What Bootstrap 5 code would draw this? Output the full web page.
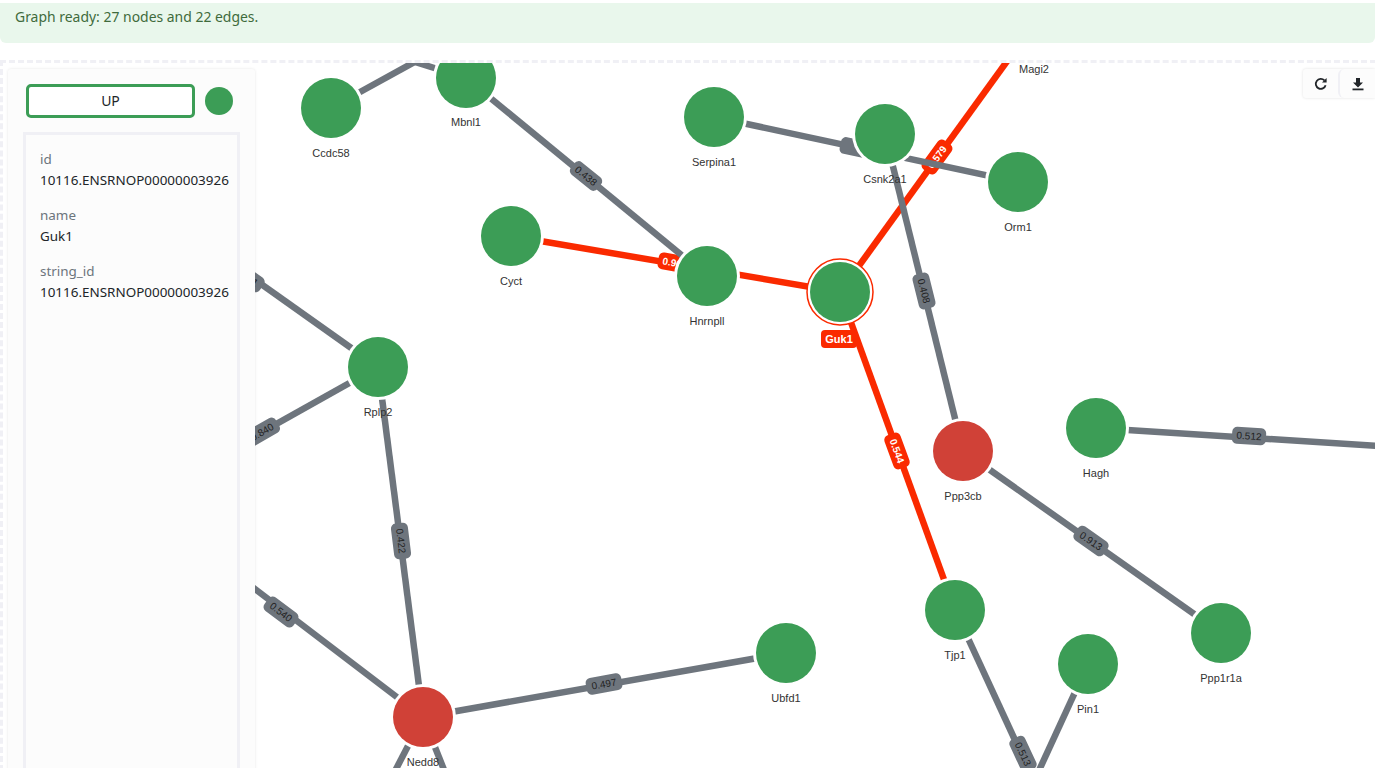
<!DOCTYPE html>
<html lang="en">
<head>
<meta charset="utf-8">
<title>Graph</title>
<link rel="stylesheet" href="https://cdn.jsdelivr.net/npm/bootstrap@5.3.0/dist/css/bootstrap.min.css">
<style>
html, body { height: 768px; overflow: hidden; background: #fff; }
body { font-family: "Noto Sans", "Open Sans", sans-serif; font-size: 14px; color: #212529; padding-top: 3px; }
.status-bar { background: #e9f7ec; color: #3f6b3c; border: 0; border-radius: 0 0 6px 6px; height: 40px; padding: 4px 15px; margin: 0 0 17px 0; font-size: 13.95px; line-height: 20px; }
.graph-shell { height: 708px; overflow: hidden; }
.graph-area { position: relative; width: 1385px; height: 720px; border: 3px dashed #f0f0f5; }
.graph-svg { position: absolute; left: -3px; top: -63px; width: 1375px; height: 831px; overflow: hidden; }
.side-panel { position: absolute; left: 5px; top: 6px; width: 247px; height: 760px; background: #fcfcfc; box-shadow: 0 0 3px rgba(0,0,0,.1); border-radius: 3px; padding: 15px 15px 0; }
.legend-btn { width: 169px; height: 34px; margin-left: 3px; background: #fff; border: 3px solid #3c9d56; border-radius: 5px; color: #212529; font-size: 14px; padding: 0; line-height: 26px; }
.legend-dot { width: 28px; height: 28px; background: #3c9d56; border-radius: 50%; margin-left: 10px; }
.attr-box { height: 660px; border: 3px solid #f0f0f5; margin-top: 14px; padding: 14px; width: 217px; }
.attr-key { color: #6c757d; font-size: 13.45px; line-height: 20px; margin-bottom: 1px; }
.attr-val { color: #212529; font-size: 13.45px; line-height: 20px; margin-bottom: 15px; white-space: nowrap; }
.tool-bar { position: absolute; left: 1300px; top: 6px; height: 29px; background: #fcfcfc; box-shadow: 0 0 3px rgba(0,0,0,.12); border-radius: 3px 0 0 3px; }
.tool-btn { width: 35px; height: 29px; padding: 0; border: 0; background: transparent; display: flex; align-items: center; justify-content: center; }
.tool-btn + .tool-btn { border-left: 2px solid #f0f0f5; width: 37px; }
.n-lbl { font-family: "Liberation Sans", Arial, sans-serif; font-size: 11px; fill: #333; text-anchor: middle; }
.e-txt { font-family: "Liberation Sans", Arial, sans-serif; font-size: 10px; fill: #222; text-anchor: middle; dominant-baseline: central; }
.e-txt-w { font-family: "Liberation Sans", Arial, sans-serif; font-size: 10px; font-weight: 700; fill: #fff; text-anchor: middle; dominant-baseline: central; }
.edge-g { stroke: #6e757d; stroke-width: 6.5; }
.edge-r { stroke: #fa2a00; stroke-width: 6.5; }
.lab-g { fill: #6e757d; }
.lab-r { fill: #fa2a00; }
.halo { fill: #fff; }
.node-g { fill: #3c9d56; }
.node-r { fill: #d04137; }
</style>
</head>
<body>
<div class="alert status-bar" role="alert">Graph ready: 27 nodes and 22 edges.</div>
<div class="graph-shell">
<div class="graph-area">
  <svg class="graph-svg" viewBox="0 0 1375 831" xmlns="http://www.w3.org/2000/svg">
    <defs><clipPath id="cv"><rect x="0" y="63" width="1375" height="705"/></clipPath></defs>
    <g clip-path="url(#cv)">
      <line class="edge-r" x1="511" y1="236" x2="840" y2="292"/>
      <line class="edge-r" x1="840" y1="292" x2="1034" y2="24"/>
      <line class="edge-r" x1="840" y1="292" x2="955" y2="610"/>
      <g transform="translate(675,263) rotate(10)"><rect class="lab-r" x="-17" y="-8.5" width="34" height="17" rx="5"/><text class="e-txt-w" x="0" y="0">0.903</text></g>
      <g transform="translate(937,157) rotate(-54)"><rect class="lab-r" x="-18" y="-8.5" width="36" height="17" rx="5"/><text class="e-txt-w" x="0" y="0">0.579</text></g>
      <g transform="translate(897,451) rotate(70)"><rect class="lab-r" x="-18" y="-8.5" width="36" height="17" rx="5"/><text class="e-txt-w" x="0" y="0">0.544</text></g>
      <line class="edge-g" x1="331" y1="108" x2="440" y2="48"/>
      <line class="edge-g" x1="415" y1="62" x2="466" y2="78"/>
      <line class="edge-g" x1="466" y1="78" x2="707" y2="276"/>
      <line class="edge-g" x1="714" y1="117" x2="1018" y2="182"/>
      <line class="edge-g" x1="885" y1="134" x2="963" y2="451"/>
      <line class="edge-g" x1="1096" y1="428" x2="1380" y2="446"/>
      <line class="edge-g" x1="963" y1="451" x2="1221" y2="633"/>
      <line class="edge-g" x1="230" y1="262" x2="378" y2="367"/>
      <line class="edge-g" x1="378" y1="367" x2="230" y2="450"/>
      <line class="edge-g" x1="378" y1="367" x2="423" y2="717"/>
      <line class="edge-g" x1="230" y1="570" x2="423" y2="717"/>
      <line class="edge-g" x1="423" y1="717" x2="786" y2="653"/>
      <line class="edge-g" x1="423" y1="717" x2="380" y2="800"/>
      <line class="edge-g" x1="423" y1="717" x2="460" y2="810"/>
      <line class="edge-g" x1="955" y1="610" x2="1038" y2="790"/>
      <line class="edge-g" x1="1088" y1="664" x2="1030" y2="790"/>
      <g transform="translate(857,148) rotate(12)"><rect class="lab-g" x="-17" y="-8.5" width="34" height="17" rx="5"/></g>
      <g transform="translate(586,176) rotate(39)"><rect class="lab-g" x="-17" y="-8" width="34" height="16" rx="5"/><text class="e-txt" x="0" y="0">0.438</text></g>
      <g transform="translate(924,291) rotate(76)"><rect class="lab-g" x="-18" y="-8.5" width="36" height="17" rx="5"/><text class="e-txt" x="0" y="0">0.408</text></g>
      <g transform="translate(1249,436) rotate(4)"><rect class="lab-g" x="-17" y="-8.5" width="34" height="17" rx="5"/><text class="e-txt" x="0" y="0">0.512</text></g>
      <g transform="translate(1091,541) rotate(35)"><rect class="lab-g" x="-18" y="-8.5" width="36" height="17" rx="5"/><text class="e-txt" x="0" y="0">0.913</text></g>
      <g transform="translate(401,541) rotate(83)"><rect class="lab-g" x="-18" y="-8.5" width="36" height="17" rx="5"/><text class="e-txt" x="0" y="0">0.422</text></g>
      <g transform="translate(281,612) rotate(37)"><rect class="lab-g" x="-18" y="-8.5" width="36" height="17" rx="5"/><text class="e-txt" x="0" y="0">0.540</text></g>
      <g transform="translate(604,684) rotate(-10)"><rect class="lab-g" x="-18" y="-8.5" width="36" height="17" rx="5"/><text class="e-txt" x="0" y="0">0.497</text></g>
      <g transform="translate(1023,754) rotate(65)"><rect class="lab-g" x="-18" y="-8.5" width="36" height="17" rx="5"/><text class="e-txt" x="0" y="0">0.513</text></g>
      <g transform="translate(262,432) rotate(-30)"><rect class="lab-g" x="-18" y="-8.5" width="36" height="17" rx="5"/><text class="e-txt" x="0" y="0">0.840</text></g>
      <g transform="translate(247,277) rotate(35)"><rect class="lab-g" x="-18" y="-8.5" width="36" height="17" rx="5"/><text class="e-txt" x="0" y="0">0.611</text></g>
      <g>
        <circle class="halo" cx="331" cy="108" r="33"/><circle class="node-g" cx="331" cy="108" r="30"/><text class="n-lbl" x="331" y="157">Ccdc58</text>
        <circle class="halo" cx="466" cy="78" r="33"/><circle class="node-g" cx="466" cy="78" r="30"/><text class="n-lbl" x="466" y="126">Mbnl1</text>
        <circle class="halo" cx="714" cy="117" r="33"/><circle class="node-g" cx="714" cy="117" r="30"/><text class="n-lbl" x="714" y="166">Serpina1</text>
        <circle class="halo" cx="885" cy="134" r="33"/><circle class="node-g" cx="885" cy="134" r="30"/><text class="n-lbl" x="885" y="183">Csnk2a1</text>
        <circle class="halo" cx="1018" cy="182" r="33"/><circle class="node-g" cx="1018" cy="182" r="30"/><text class="n-lbl" x="1018" y="231">Orm1</text>
        <circle class="halo" cx="511" cy="236" r="33"/><circle class="node-g" cx="511" cy="236" r="30"/><text class="n-lbl" x="511" y="285">Cyct</text>
        <circle class="halo" cx="707" cy="276" r="33"/><circle class="node-g" cx="707" cy="276" r="30"/><text class="n-lbl" x="707" y="325">Hnrnpll</text>
        <circle cx="840" cy="292" r="33" fill="#fff" stroke="#fa2a00" stroke-width="1.5"/><circle class="node-g" cx="840" cy="292" r="30"/>
        <rect class="lab-r" x="821" y="330" width="36" height="18" rx="4"/><text class="e-txt-w" x="839" y="339" style="font-size:11px">Guk1</text>
        <circle class="halo" cx="378" cy="367" r="33"/><circle class="node-g" cx="378" cy="367" r="30"/><text class="n-lbl" x="378" y="416">Rplp2</text>
        <circle class="halo" cx="963" cy="451" r="33"/><circle class="node-r" cx="963" cy="451" r="30"/><text class="n-lbl" x="963" y="500">Ppp3cb</text>
        <circle class="halo" cx="1096" cy="428" r="33"/><circle class="node-g" cx="1096" cy="428" r="30"/><text class="n-lbl" x="1096" y="477">Hagh</text>
        <circle class="halo" cx="955" cy="610" r="33"/><circle class="node-g" cx="955" cy="610" r="30"/><text class="n-lbl" x="955" y="659">Tjp1</text>
        <circle class="halo" cx="1088" cy="664" r="33"/><circle class="node-g" cx="1088" cy="664" r="30"/><text class="n-lbl" x="1088" y="713">Pin1</text>
        <circle class="halo" cx="1221" cy="633" r="33"/><circle class="node-g" cx="1221" cy="633" r="30"/><text class="n-lbl" x="1221" y="682">Ppp1r1a</text>
        <circle class="halo" cx="786" cy="653" r="33"/><circle class="node-g" cx="786" cy="653" r="30"/><text class="n-lbl" x="786" y="702">Ubfd1</text>
        <circle class="halo" cx="423" cy="717" r="33"/><circle class="node-r" cx="423" cy="717" r="30"/><text class="n-lbl" x="423" y="766">Nedd8</text>
        <circle class="halo" cx="1034" cy="24" r="33"/><circle class="node-g" cx="1034" cy="24" r="30"/><text class="n-lbl" x="1034" y="73">Magi2</text>
      </g>
    </g>
  </svg>
  <aside class="side-panel">
    <div class="d-flex align-items-center">
      <button type="button" class="btn legend-btn">UP</button>
      <span class="legend-dot"></span>
    </div>
    <div class="attr-box">
      <div class="attr-key">id</div>
      <div class="attr-val">10116.ENSRNOP00000003926</div>
      <div class="attr-key">name</div>
      <div class="attr-val">Guk1</div>
      <div class="attr-key">string_id</div>
      <div class="attr-val">10116.ENSRNOP00000003926</div>
    </div>
  </aside>
  <div class="tool-bar d-flex">
    <button type="button" class="btn tool-btn" aria-label="Reload">
      <svg width="14" height="14" viewBox="0 0 14 14"><path d="M11.6 8.2A5 5 0 1 1 10.4 3.4" fill="none" stroke="#212529" stroke-width="1.8"/><path d="M12.6 1v4.6H8z" fill="#212529"/></svg>
    </button>
    <button type="button" class="btn tool-btn" aria-label="Download">
      <svg width="14" height="14" viewBox="0 0 14 14"><path d="M5 1h4v4.5h3L7 10.5 2 5.5h3z" fill="#212529"/><rect x="1.5" y="11.5" width="11" height="1.8" fill="#212529"/></svg>
    </button>
  </div>
</div>
</div>
<script src="https://cdn.jsdelivr.net/npm/bootstrap@5.3.0/dist/js/bootstrap.bundle.min.js"></script>
</body>
</html>
